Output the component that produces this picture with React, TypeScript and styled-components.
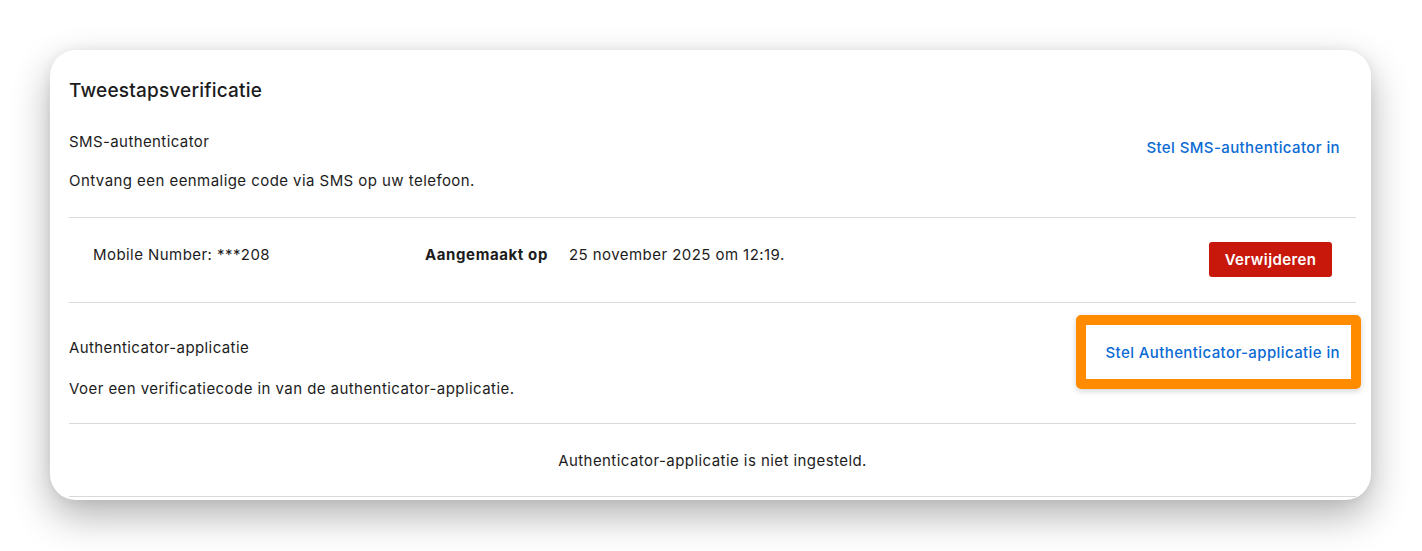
import React from "react";
import styled, { createGlobalStyle } from "styled-components";

const Global = createGlobalStyle`
  html, body { margin: 0; padding: 0; background: #ffffff; }
  body { font-family: Inter, "Noto Sans", sans-serif; color: #1c1c1c; }
  * { box-sizing: border-box; }
`;

const Page = styled.div`
  width: 1422px;
  height: 551px;
  padding: 50px 51px 0 50px;
  background: #ffffff;
`;

const Card = styled.section`
  height: 450px;
  background: #ffffff;
  border-radius: 26px;
  overflow: hidden;
  box-shadow: 0 16px 38px rgba(0, 0, 0, 0.3), 0 0 12px rgba(0, 0, 0, 0.06);
  padding: 0 15px 0 19px;
`;

const Title = styled.h2`
  margin: 0;
  height: 81px;
  display: flex;
  align-items: center;
  font-size: 19px;
  font-weight: 500;
  letter-spacing: 0.2px;
`;

const Section = styled.div`
  display: grid;
  grid-template-columns: 1fr auto;
  grid-template-rows: auto auto;
  padding-bottom: ${(p) => p.$bottom}px;
  border-bottom: 1px solid #d9d9d9;
`;

const SectionName = styled.div`
  font-size: 15px;
  line-height: 22px;
  letter-spacing: 0.4px;
  padding-top: ${(p) => p.$top}px;
`;

const Desc = styled.div`
  grid-column: 1 / 2;
  font-size: 15px;
  line-height: 22px;
  letter-spacing: 0.44px;
  margin-top: ${(p) => p.$gap}px;
`;

const LinkCell = styled.div`
  grid-row: 1 / 3;
  grid-column: 2 / 3;
  align-self: start;
  display: flex;
  justify-content: flex-end;
  padding-top: ${(p) => p.$top}px;
`;

const LinkButton = styled.a`
  font-size: 15px;
  line-height: 22px;
  letter-spacing: 0.4px;
  color: #0b6ad4;
  font-weight: 500;
  text-decoration: none;
  padding: 0 16px 0 20px;
  cursor: pointer;
`;

const Highlight = styled.div`
  border: 10px solid #ff8c00;
  border-radius: 5px;
  margin-right: -5px;
  padding: 17px 11px 15px 0;
  display: flex;
  box-shadow: 0 2px 6px rgba(0, 0, 0, 0.18);
  & > ${LinkButton} { padding: 0 0 0 20px; }
`;

const DeviceRow = styled.div`
  height: 85px;
  display: grid;
  grid-template-columns: 332px 144px 1fr auto;
  align-items: center;
  padding: 0 24px 0 24px;
  border-bottom: 1px solid #d9d9d9;
  font-size: 15px;
  letter-spacing: 0.44px;
`;

const Cell = styled.span`
  font-weight: ${(p) => (p.$bold ? 700 : 400)};
  letter-spacing: ${(p) => (p.$bold ? 0.6 : 0.44)}px;
  margin-top: -12px;
`;

const DangerButton = styled.button`
  height: 35px;
  width: 123px;
  margin-top: -2px;
  border: none;
  border-radius: 3px;
  background: #c8180c;
  color: #ffffff;
  font-family: inherit;
  font-size: 15px;
  font-weight: 600;
  letter-spacing: 0.4px;
  cursor: pointer;
`;

const EmptyRow = styled.div`
  height: 73px;
  display: flex;
  align-items: center;
  justify-content: center;
  border-bottom: 1px solid #d9d9d9;
  font-size: 15px;
  letter-spacing: 0.44px;
`;

export default function App() {
  return (
    <Page>
      <Global />
      <Card>
        <Title>Tweestapsverificatie</Title>
        <Section $bottom={25}>
          <SectionName $top={0}>SMS-authenticator</SectionName>
          <LinkCell $top={6}>
            <LinkButton>Stel SMS-authenticator in</LinkButton>
          </LinkCell>
          <Desc $gap={17}>Ontvang een eenmalige code via SMS op uw telefoon.</Desc>
        </Section>
        <DeviceRow>
          <Cell>Mobile Number: ***208</Cell>
          <Cell $bold>Aangemaakt op</Cell>
          <Cell>25 november 2025 om 12:19.</Cell>
          <DangerButton>Verwijderen</DangerButton>
        </DeviceRow>
        <Section $bottom={23}>
          <SectionName $top={34}>Authenticator-applicatie</SectionName>
          <LinkCell $top={12}>
            <Highlight>
              <LinkButton>Stel Authenticator-applicatie in</LinkButton>
            </Highlight>
          </LinkCell>
          <Desc $gap={19}>Voer een verificatiecode in van de authenticator-applicatie.</Desc>
        </Section>
        <EmptyRow>Authenticator-applicatie is niet ingesteld.</EmptyRow>
      </Card>
    </Page>
  );
}
